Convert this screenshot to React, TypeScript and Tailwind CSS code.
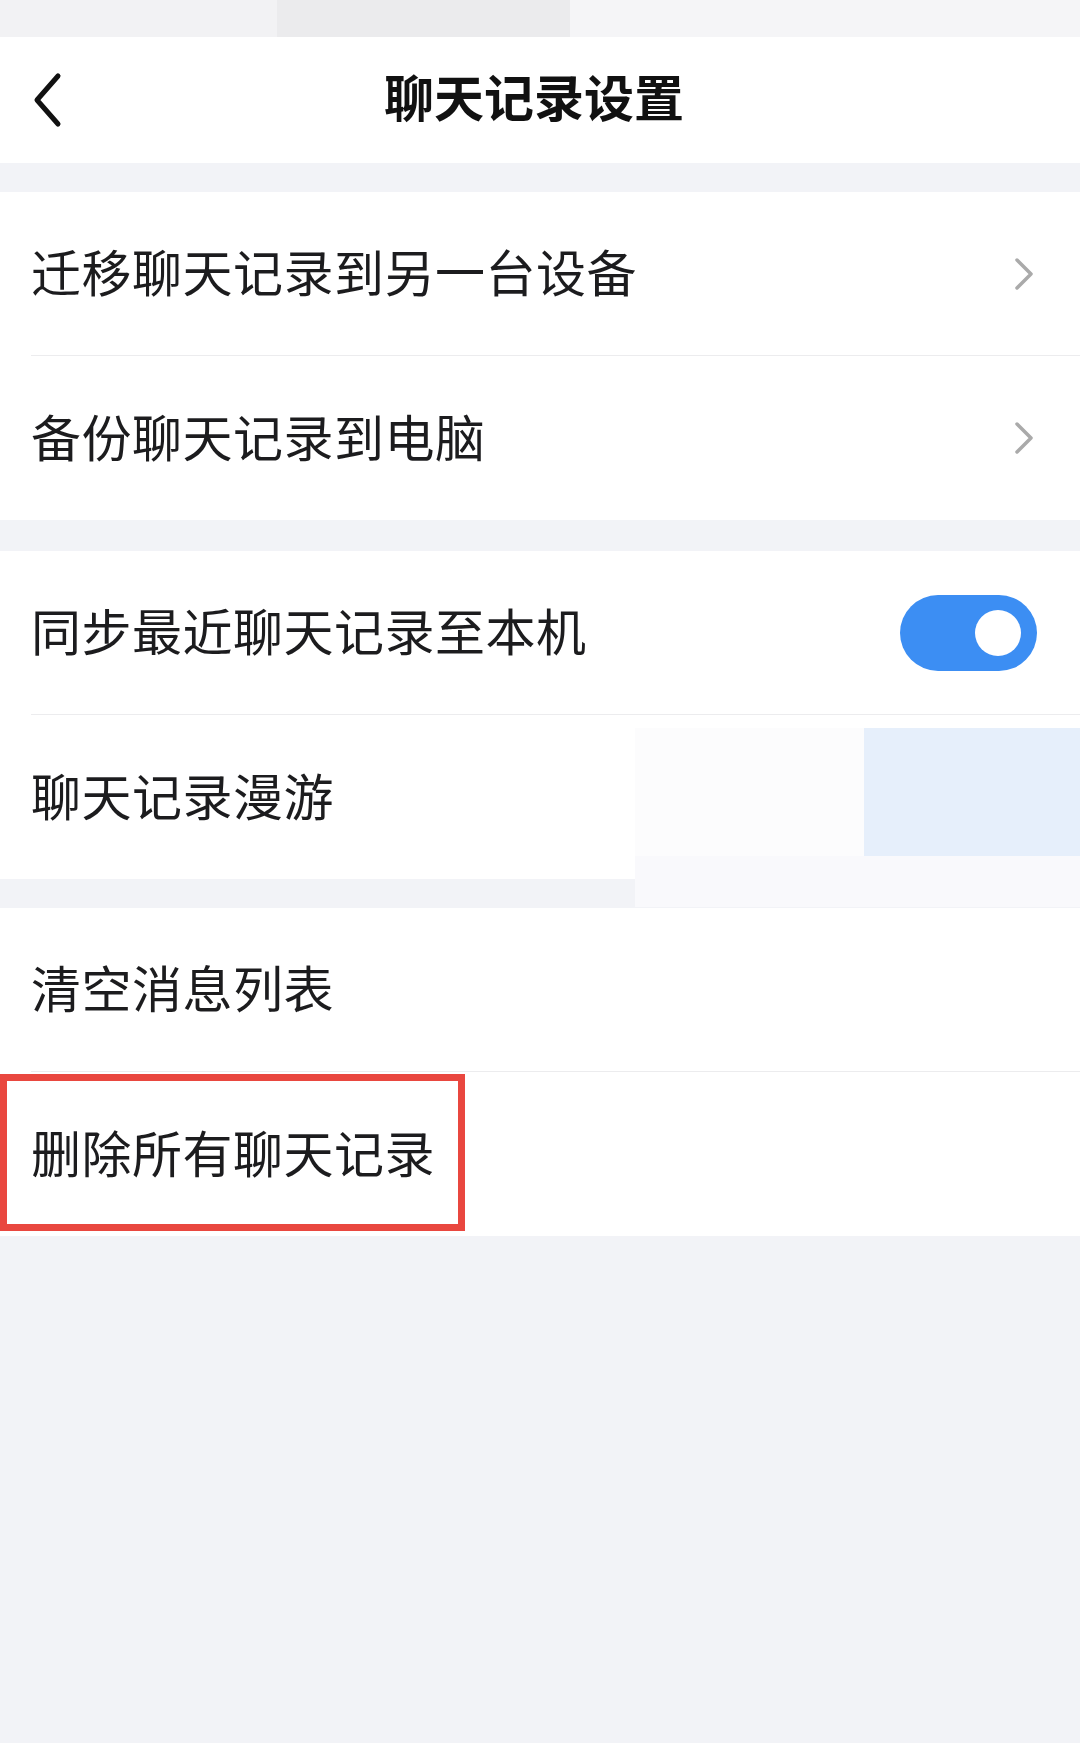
import React from "react";

function ChevronRight() {
  return (
    <svg width="24" height="34" viewBox="0 0 24 34" fill="none">
      <path d="M4 3 L18 17 L4 31" stroke="#aaaaaa" strokeWidth="3.5" strokeLinecap="round" strokeLinejoin="round" />
    </svg>
  );
}

function BackChevron() {
  return (
    <svg width="34" height="56" viewBox="0 0 34 56" fill="none">
      <path d="M27 4 L6 28 L27 52" stroke="#111111" strokeWidth="5" strokeLinecap="round" strokeLinejoin="round" />
    </svg>
  );
}

function Row({ label, right, divider }: { label: string; right?: React.ReactNode; divider?: boolean }) {
  return (
    <div className="pl-[31px] bg-white">
      <div className={"h-[164px] flex items-center justify-between pr-[43px] " + (divider ? "border-b border-[#ececee]" : "")}>
        <span className="text-[50px] leading-none text-[#1c1c1e] tracking-[0.5px] mb-[7px]">{label}</span>
        {right}
      </div>
    </div>
  );
}

function Toggle() {
  return (
    <div className="w-[137px] h-[76px] rounded-full bg-[#3c8ef3] flex items-center justify-end pr-[16px]">
      <div className="w-[46px] h-[46px] rounded-full bg-white" />
    </div>
  );
}

export default function App() {
  return (
    <div className="relative w-[1080px] min-h-[1743px] bg-[#f2f3f7] font-['Noto_Sans_CJK_SC','Noto_Sans',sans-serif] overflow-hidden">
      {/* status band */}
      <div className="h-[37px] flex">
        <div className="w-[277px] bg-[#f2f2f4]" />
        <div className="w-[293px] bg-[#ebebed]" />
        <div className="flex-1 bg-[#f5f5f7]" />
      </div>
      {/* header */}
      <div className="h-[126px] bg-white relative flex items-center justify-center">
        <div className="absolute left-[31px] top-[35px]">
          <BackChevron />
        </div>
        <span className="text-[50px] font-bold leading-none text-[#111] -ml-[12px] mb-[10px]">聊天记录设置</span>
      </div>
      <div className="h-[29px]" />
      <div>
        <Row label="迁移聊天记录到另一台设备" right={<ChevronRight />} divider />
        <Row label="备份聊天记录到电脑" right={<ChevronRight />} />
      </div>
      <div className="h-[31px]" />
      <div>
        <Row label="同步最近聊天记录至本机" right={<Toggle />} divider />
        <Row label="聊天记录漫游" />
      </div>
      <div className="h-[29px]" />
      <div className="relative">
        <Row label="清空消息列表" divider />
        <Row label="删除所有聊天记录" />
        <div className="absolute left-0 top-[166px] w-[465px] h-[157px] border-[7px] border-[#e9473f]" />
      </div>

      {/* image artifacts overlay */}
      <div className="absolute left-[635px] top-[728px] w-[445px] h-[128px] bg-[#fcfcfd]" />
      <div className="absolute left-[635px] top-[856px] w-[445px] h-[51px] bg-[#f9f9fc]" />
      <div className="absolute left-[864px] top-[728px] w-[216px] h-[128px] bg-[#e6effb]" />
    </div>
  );
}
